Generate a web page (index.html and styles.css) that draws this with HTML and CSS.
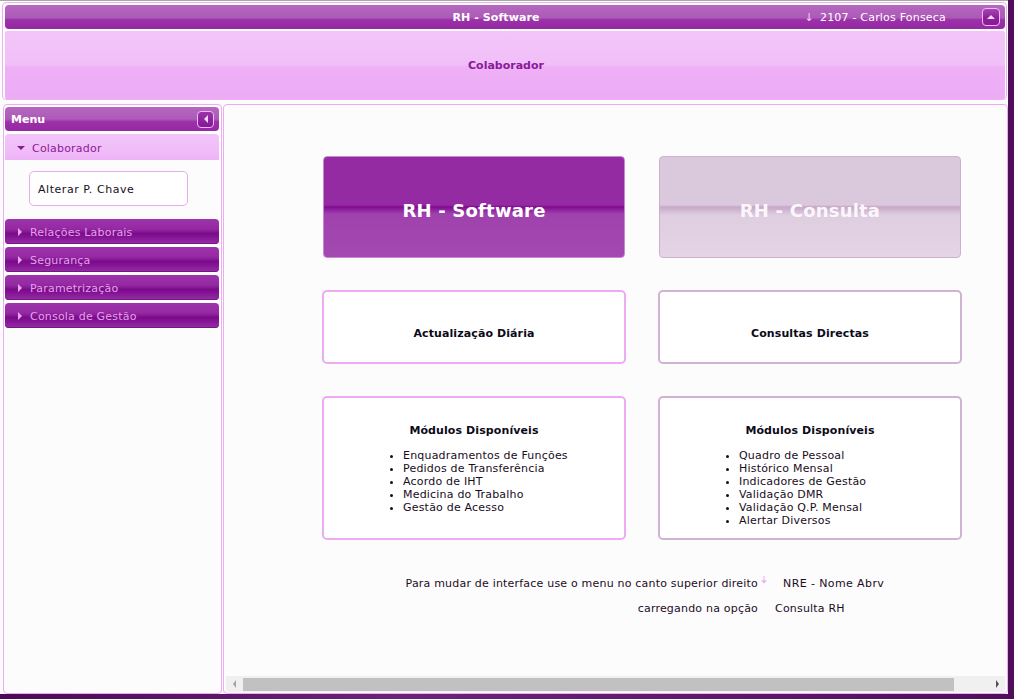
FILE: index.html
```html
<!DOCTYPE html>
<html lang="pt">
<head>
<meta charset="utf-8">
<title>RH - Software</title>
<link rel="stylesheet" href="styles.css">
</head>
<body>
<div class="window">
  <div class="top">
    <div class="titlebar">
      <div></div>
      <div class="title">RH - Software</div>
      <div class="user">
        <span class="user-arrow">&#8595;</span>
        <span class="user-name">2107 - Carlos Fonseca</span>
        <span class="tb-btn"><span class="tri tri-up"></span></span>
      </div>
    </div>
    <div class="header">Colaborador</div>
  </div>
  <div class="panels">
    <aside class="side">
      <div class="menu-head">
        <span class="menu-title">Menu</span>
        <span class="tb-btn"><span class="tri tri-left"></span></span>
      </div>
      <div class="acc acc-open"><span class="tri tri-down"></span>Colaborador</div>
      <div class="acc-body">
        <div class="link-box">Alterar P. Chave</div>
      </div>
      <div class="acc"><span class="tri tri-right"></span>Relações Laborais</div>
      <div class="acc"><span class="tri tri-right"></span>Segurança</div>
      <div class="acc"><span class="tri tri-right"></span>Parametrização</div>
      <div class="acc"><span class="tri tri-right"></span>Consola de Gestão</div>
    </aside>
    <main class="main">
      <div class="content">
        <div class="grid">
          <div class="big big-soft">RH - Software</div>
          <div class="big big-cons">RH - Consulta</div>
          <div class="box box-pink box-short"><div class="box-title">Actualização Diária</div></div>
          <div class="box box-mauve box-short"><div class="box-title">Consultas Directas</div></div>
          <div class="box box-pink box-tall">
            <div class="box-title">Módulos Disponíveis</div>
            <ul class="mods">
              <li>Enquadramentos de Funções</li>
              <li>Pedidos de Transferência</li>
              <li>Acordo de IHT</li>
              <li>Medicina do Trabalho</li>
              <li>Gestão de Acesso</li>
            </ul>
          </div>
          <div class="box box-mauve box-tall">
            <div class="box-title">Módulos Disponíveis</div>
            <ul class="mods">
              <li>Quadro de Pessoal</li>
              <li>Histórico Mensal</li>
              <li>Indicadores de Gestão</li>
              <li>Validação DMR</li>
              <li>Validação Q.P. Mensal</li>
              <li>Alertar Diversos</li>
            </ul>
          </div>
        </div>
        <div class="note">
          <div class="note-l">Para mudar de interface use o menu no canto superior direito</div>
          <div class="note-r">
            <svg class="note-arrow" width="6" height="8" viewBox="0 0 6 8"><path d="M2.5 0h1v5h-1z M0 4.5h6L3 7.5z" fill="#eea8f2"/></svg>
            <span class="note-v1">NRE - Nome Abrv</span>
          </div>
          <div class="note-l">carregando na opção</div>
          <div class="note-r"><span class="note-v2">Consulta RH</span></div>
        </div>
      </div>
      <div class="hscroll">
        <span class="sc-arrow"><span class="tri tri-sleft"></span></span>
        <span class="sc-thumb"></span>
        <span class="sc-space"></span>
        <span class="sc-arrow"><span class="tri tri-sright"></span></span>
      </div>
    </main>
  </div>
</div>
</body>
</html>
```

FILE: styles.css
```css
* { box-sizing: border-box; }

html, body {
  margin: 0;
  padding: 0;
}

body {
  width: 1014px;
  height: 699px;
  overflow: hidden;
  background: linear-gradient(to right, #4a0b55, #6a2478 40%, #4e0e5a);
  font-family: "DejaVu Sans", Verdana, sans-serif;
  font-size: 11px;
  letter-spacing: 0.2px;
  color: #161020;
}

.window {
  width: 1008px;
  height: 694px;
  background: #fcfcfd;
  border-top: 1px solid #a9a9a9;
  display: flex;
  flex-direction: column;
}

/* ---------- top ---------- */
.top {
  margin: 1px 1px 0 2px;
  border: 1px solid #efb0f2;
  border-radius: 4px;
  padding: 2px 1px 0 2px;
  display: flex;
  flex-direction: column;
  gap: 2px;
}

.titlebar {
  height: 24px;
  border-radius: 4px;
  background: linear-gradient(to bottom, #b468bf 0%, #ad5ab8 52%, #9b30a8 62%, #9529a3 100%);
  display: grid;
  grid-template-columns: 1fr auto 1fr;
  align-items: center;
  color: #fff;
}

.title {
  font-weight: bold;
  letter-spacing: 0.1px;
  margin-right: 18px;
}

.user {
  display: flex;
  align-items: center;
  justify-content: flex-end;
  padding-right: 5px;
}

.user-arrow {
  color: #f3d0f6;
  font-size: 11px;
  margin-right: 6px;
}

.user-name {
  margin-right: 36px;
}

.tb-btn {
  width: 18px;
  height: 18px;
  border: 1px solid #f3b8f6;
  border-radius: 4px;
  background: linear-gradient(to bottom, #a447b1 0%, #8e1f9c 55%, #8a1898 100%);
  display: flex;
  align-items: center;
  justify-content: center;
}

.tri {
  display: block;
  width: 0;
  height: 0;
}
.tri-up {
  border-left: 4px solid transparent;
  border-right: 4px solid transparent;
  border-bottom: 4px solid #f6d8f8;
}
.tri-left {
  border-top: 4px solid transparent;
  border-bottom: 4px solid transparent;
  border-right: 4px solid #f6d8f8;
}
.tri-down {
  border-left: 4px solid transparent;
  border-right: 4px solid transparent;
  border-top: 4px solid #8a1a96;
  margin: 0 7px 0 12px;
}
.tri-right {
  border-top: 4px solid transparent;
  border-bottom: 4px solid transparent;
  border-left: 4px solid #e6a8ec;
  margin: 0 8px 0 13px;
}

.header {
  height: 68px;
  border-radius: 2px;
  background: linear-gradient(to bottom, #f2c4f9 0%, #f1bff8 50%, #eeb0f7 53%, #edabf6 100%);
  display: flex;
  align-items: center;
  justify-content: center;
  font-weight: bold;
  letter-spacing: 0;
  color: #8a1a98;
  padding-left: 2px;
}

/* ---------- panels ---------- */
.panels {
  flex: 1;
  display: flex;
  margin-top: 4px;
  min-height: 0;
}

.side {
  width: 219px;
  margin-left: 3px;
  border: 1px solid #eeaaf2;
  border-radius: 4px;
  padding: 2px 2px 0 1px;
  display: flex;
  flex-direction: column;
  background: #fcfcfd;
}

.menu-head {
  height: 24px;
  border-radius: 4px;
  background: linear-gradient(to bottom, #b468bf 0%, #ad5ab8 50%, #9b30a8 62%, #9529a3 100%);
  display: flex;
  align-items: center;
  justify-content: space-between;
  padding: 1px 5px 0 6px;
  color: #fff;
  font-weight: bold;
  letter-spacing: 0;
}

.menu-head .tb-btn {
  width: 17px;
  height: 17px;
  margin-top: -1px;
  border-color: #f0b8f4;
  background: linear-gradient(to bottom, #9a34a7 0%, #85169a 100%);
}

.acc {
  height: 25px;
  margin-top: 3px;
  padding-top: 1px;
  border-radius: 4px;
  display: flex;
  align-items: center;
  color: #e2a2e8;
  background: linear-gradient(to bottom, #9d34ab 0%, #9529a3 40%, #7c0b8b 58%, #841495 72%, #9330a2 100%);
  box-shadow: inset 0 -1px 0 #7a1288;
}

.acc-open {
  height: 26px;
  padding-top: 2px;
  border-radius: 4px 4px 0 0;
  color: #8a1a98;
  background: linear-gradient(to bottom, #f2c4f9 0%, #f1bef8 55%, #eeb2f7 100%);
  box-shadow: none;
}

.acc-body {
  padding: 11px 0 13px 24px;
}

.link-box {
  width: 159px;
  height: 35px;
  border: 1px solid #e8aaee;
  border-radius: 5px;
  background: #fff;
  display: flex;
  align-items: center;
  padding: 1px 0 0 8px;
  letter-spacing: 0.55px;
  color: #141018;
}

.acc-body + .acc {
  margin-top: 0;
}

/* ---------- main ---------- */
.main {
  width: 785px;
  margin-left: 1px;
  border: 1px solid #eeaaf2;
  border-radius: 4px;
  padding: 0 2px 1px 2px;
  display: flex;
  flex-direction: column;
  background: #fcfcfd;
}

.content {
  flex: 1;
  padding-top: 51px;
}

.grid {
  margin-left: 96px;
  display: grid;
  grid-template-columns: 304px 304px;
  column-gap: 32px;
  row-gap: 32px;
}

.big {
  margin: 0 1px;
  height: 102px;
  border-radius: 4px;
  padding-top: 43px;
  text-align: center;
  font-size: 18px;
  line-height: 22px;
  font-weight: bold;
  letter-spacing: 0.2px;
  color: #fff;
}

.big-soft {
  border: 1px solid #c889d2;
  background: linear-gradient(to bottom, #952ba3 0%, #952ba3 48%, #7f0a8e 50%, #8a1d9b 52%, #a042ad 57%, #a449b1 100%);
}

.big-cons {
  border: 1px solid #cdb2cf;
  background: linear-gradient(to bottom, #dac8dc 0%, #dac8dc 48%, #c5a6c7 50%, #cfb6d1 53%, #dfcde0 58%, #e4d4e5 100%);
  color: #fbf6fb;
}

.box {
  border: 2px solid #eeaaf2;
  border-radius: 5px;
  background: #fff;
}

.box-mauve {
  border-color: #d0b2d2;
}

.box-short {
  height: 74px;
  padding-top: 35px;
}

.box-tall {
  height: 144px;
  padding-top: 26px;
}

.box-title {
  text-align: center;
  font-weight: bold;
  letter-spacing: 0.1px;
  line-height: 13px;
  color: #0c0a18;
}

.mods {
  margin: 12px 0 0 0;
  padding-left: 79px;
  line-height: 13px;
  list-style: disc;
  color: #1a0c1c;
}

.note {
  margin-top: 37px;
  display: grid;
  grid-template-columns: 532px auto;
  row-gap: 12px;
  line-height: 13px;
  color: #1c0c1e;
}

.note-l {
  text-align: right;
}

.note-r {
  display: flex;
  align-items: center;
}

.note-arrow {
  display: block;
  margin: -7px 0 0 3px;
}

.note-v1 {
  margin-left: 16px;
  letter-spacing: 0.4px;
}

.note-v2 {
  margin-left: 17px;
}

/* ---------- scrollbar ---------- */
.hscroll {
  height: 16px;
  background: #f0f0f0;
  display: flex;
  align-items: stretch;
}

.sc-arrow {
  width: 16px;
  display: flex;
  align-items: center;
  justify-content: center;
}

.sc-thumb {
  width: 711px;
  margin: 2px 0 1px 1px;
  background: #c1c1c1;
}

.sc-space {
  flex: 1;
}

.tri-sleft {
  border-top: 4px solid transparent;
  border-bottom: 4px solid transparent;
  border-right: 3px solid #a3a3a3;
}

.tri-sright {
  border-top: 4px solid transparent;
  border-bottom: 4px solid transparent;
  border-left: 3px solid #505050;
}
```
